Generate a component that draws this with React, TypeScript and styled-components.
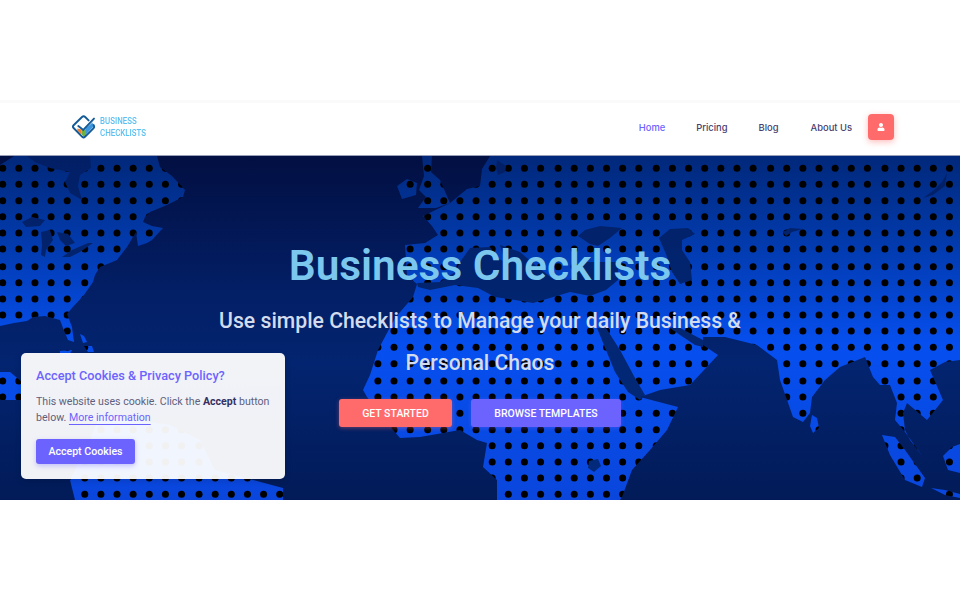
import React from "react";
import styled, { createGlobalStyle } from "styled-components";
import { FaUser } from "react-icons/fa";

const Global = createGlobalStyle`
  html, body { margin: 0; padding: 0; background: #fff; }
  body { font-family: Roboto, "Liberation Sans", sans-serif; }
  * { box-sizing: border-box; }
`;

const Page = styled.div`
  position: relative;
  width: 960px;
  height: 600px;
  padding-top: 100px;
  overflow: hidden;
  background: #fff;
`;

const Header = styled.header`
  height: 56px;
  background: #fff;
  border-top: 3px solid #fafafa;
  border-bottom: 1px solid #9a9fb8;
  display: flex;
  align-items: center;
  justify-content: space-between;
  padding: 0 66px 4px 72px;
`;

const Brand = styled.div`
  display: flex;
  align-items: center;
  gap: 4px;
`;

const BrandText = styled.div`
  display: flex;
  flex-direction: column;
  font-family: Roboto, sans-serif;
  font-size: 9.5px;
  line-height: 12px;
  font-weight: 500;
  color: #5cc0f2;
  text-transform: uppercase;
  transform: scaleX(0.83);
  transform-origin: left center;
`;

const Nav = styled.nav`
  display: flex;
  align-items: center;
`;

const NavLink = styled.a<{ $active?: boolean; $gap: number }>`
  font-family: Inter, "Open Sans", sans-serif;
  font-size: 9.4px;
  font-weight: 500;
  color: ${(p) => (p.$active ? "#6c63ff" : "#454070")};
  margin-right: ${(p) => p.$gap}px;
`;

const UserButton = styled.button`
  width: 26px;
  height: 26px;
  border: 0;
  padding: 0;
  border-radius: 4px;
  background: #ff6b6b;
  color: #fff;
  display: flex;
  align-items: center;
  justify-content: center;
  box-shadow: 0 2px 6px rgba(255, 107, 107, 0.45);
`;

const Hero = styled.section`
  position: relative;
  height: 344px;
  overflow: hidden;
  display: flex;
  flex-direction: column;
  align-items: center;
  background: linear-gradient(180deg, #020f42 0%, #031f66 40%, #032470 60%, #021b58 100%);
`;

const MapArt = styled.svg`
  position: absolute;
  inset: 0;
  width: 960px;
  height: 344px;
`;

const Title = styled.h1`
  position: relative;
  margin: 80px 0 0;
  font-size: 42.4px;
  line-height: 60px;
  font-weight: 600;
  color: #7cc7ee;
`;

const Subtitle = styled.p`
  position: relative;
  margin: 4px 0 0;
  width: 560px;
  text-align: center;
  font-size: 21.2px;
  line-height: 42px;
  font-weight: 500;
  color: #d3dcef;
`;

const Actions = styled.div`
  position: relative;
  margin-top: 15px;
  display: flex;
  gap: 19px;
`;

const HeroButton = styled.a<{ $tone: string; $width: number }>`
  width: ${(p) => p.$width}px;
  height: 28px;
  border-radius: 3px;
  display: flex;
  align-items: center;
  justify-content: center;
  background: ${(p) => p.$tone};
  color: #fff;
  font-size: 10.5px;
  font-weight: 500;
  box-shadow: 0 1px 4px ${(p) => p.$tone}66;
`;

const CookieCard = styled.aside`
  position: absolute;
  left: 21px;
  top: 353px;
  width: 264px;
  height: 126px;
  padding: 15px 15px 0;
  border-radius: 5px;
  background: rgba(255, 255, 255, 0.945);
  box-shadow: 0 2px 6px rgba(0, 0, 0, 0.15);
`;

const CookieTitle = styled.h4`
  margin: 0;
  font-size: 12.7px;
  line-height: 16px;
  font-weight: 500;
  color: #6c63ff;
`;

const CookieText = styled.p`
  margin: 10px 0 0;
  font-size: 10.6px;
  line-height: 15.5px;
  color: #5f5f7c;

  strong {
    font-weight: 700;
    color: #35305f;
  }
`;

const CookieLink = styled.a`
  color: #6c63ff;
  text-decoration: underline;
  text-decoration-color: #6c63ff;
  text-decoration-thickness: 1px;
  text-underline-offset: 3px;
`;

const CookieButton = styled.button`
  display: block;
  margin-top: 14px;
  width: 99px;
  height: 25px;
  border: 0;
  padding: 0;
  border-radius: 3px;
  background: #6c63ff;
  color: #fff;
  font-family: Roboto, sans-serif;
  font-size: 10.6px;
  font-weight: 500;
  box-shadow: 0 2px 5px rgba(108, 99, 255, 0.35);
`;

const rows = [168.3,184.3,200.7,216.7,233,249,266.7,282.7,299,315,331,347.3,363.7,381,397,413.3,429.7,445.7,462,478,494.3];
const jumps = [75,190,305,418,550,650,762,878];
const cols: number[] = [];
{
  let x = 2.7;
  while (x < 965) {
    cols.push(x);
    const next = x + 16.13;
    const hit = jumps.some((j) => x < j && next >= j);
    x = next + (hit ? 1.4 : 0);
  }
}

const land = [
  // North America
  "M14 156 L157 156 L160 167 L172 176 L185 190 L183 197 L167 205 L150 212 L145 217 L143 222 L152 226 L163 228 L152 240 L147 243 L138 246 L136 232 L127 247 L117 260 L100 267 L95 275 L93 282 L84 295 L72 308 L67 314 L72 327 L74 342 L68 340 L63 328 L60 320 L45 316 L33 317 L27 321 L14 323 L0 326 L0 165 Z",
  // Caribbean islands
  "M80 334 L84 336 L87 342 L83 343 Z",
  "M84 346 L92 346 L94 352 L88 352 Z",
  "M60 351 L72 350 L70 354 L60 354 Z",
  // Central America & S America
  "M0 372 L10 372 L22 382 L22 400 L0 400 Z",
  "M100 415 L170 425 L200 440 L215 470 L283 488 L283 500 L75 500 L70 480 L90 440 Z",
  // Ireland & UK
  "M397 186 L407 179 L417 183 L416 195 L402 199 Z",
  "M422 156 L432 156 L431 172 L440 180 L450 203 L436 208 L418 208 L426 197 L419 190 L424 176 Z",
  // Eurasia + Africa
  "M490 156 L960 156 L960 360 L945 362 L930 370 L943 400 L927 420 L907 403 L903 413 L905 430 L910 440 L923 457 L905 432 L895 420 L897 403 L890 385 L880 385 L873 377 L865 357 L840 367 L825 380 L812 397 L810 413 L803 422 L793 417 L780 380 L777 360 L757 345 L725 337 L703 337 L703 345 L718 355 L690 385 L660 390 L640 397 L678 407 L667 430 L650 450 L632 470 L622 497 L620 500 L497 500 L497 480 L483 467 L487 443 L477 440 L460 430 L420 437 L400 438 L387 423 L367 397 L363 390 L370 375 L378 350 L395 318 L413 297 L417 284 L407 276 L405 245 L425 243 L438 235 L432 226 L423 216 L450 203 L467 189 L480 186 L482 169 Z",
  // Sri Lanka, Sumatra, Borneo, Java, Hainan
  "M812 415 L817 418 L819 428 L813 433 L810 426 Z",
  "M882 435 L895 437 L905 450 L925 478 L922 487 L905 480 L890 455 Z",
  "M943 456 L952 447 L960 444 L960 473 L948 470 Z",
  "M931 488 L945 490 L960 494 L960 498 L945 495 Z",
];

const seas = [
  // Hudson Bay & Canada north
  "M27 156 L90 156 L91 168 L80 175 L78 186 L82 200 L70 193 L65 182 L70 172 L50 168 L35 162 Z",
  // Great lakes
  "M22 222 L32 217 L45 220 L40 226 L26 227 Z",
  "M41 232 L50 230 L53 240 L46 250 L45 257 L41 255 L42 245 Z",
  "M57 232 L68 234 L75 243 L66 246 L60 240 Z",
  "M62 257 L72 250 L88 243 L93 243 L80 252 L70 257 Z",
  // Baltic
  "M497 160 L506 166 L505 172 L498 175 L496 168 Z",
  // Mediterranean
  "M417 283 L440 282 L455 272 L460 262 L470 248 L490 247 L497 258 L505 262 L500 245 L520 252 L535 265 L552 278 L570 280 L580 262 L600 262 L618 262 L618 280 L606 290 L590 296 L570 292 L550 298 L533 303 L515 300 L495 297 L478 288 L455 285 L430 290 L418 287 Z",
  // Black sea
  "M578 236 L585 230 L600 226 L622 228 L610 238 L598 246 L590 244 Z",
  // Caspian
  "M659 238 L670 229 L688 228 L695 234 L682 240 L682 250 L690 262 L692 280 L680 284 L672 272 L666 254 Z",
  // Aral
  "M783 232 L790 228 L803 229 L792 232 L786 236 Z",
  // Baikal
  "M947 173 L945 186 L933 195 L923 198 L934 190 L942 182 Z",
  // Persian gulf
  "M670 328 L680 328 L703 340 L703 347 L695 345 L680 335 Z",
  // Red sea
  "M597 328 L606 328 L620 350 L635 378 L645 395 L640 400 L628 392 L615 372 L608 355 Z",
  // Lake Victoria
  "M589 461 L598 459 L601 466 L594 472 L588 468 Z",
  // Gulf by Hainan
  "M932 372 L960 362 L960 380 L950 372 L938 380 Z",
];

const HeroMap = () => (
  <MapArt viewBox="0 156 960 344" aria-hidden="true">
    <defs>
      <linearGradient id="landFill" x1="0" y1="156" x2="0" y2="500" gradientUnits="userSpaceOnUse">
        <stop offset="0" stopColor="#01287a" />
        <stop offset="0.25" stopColor="#023aac" />
        <stop offset="0.55" stopColor="#064fef" />
        <stop offset="1" stopColor="#0a46dc" />
      </linearGradient>
      <linearGradient id="seaFill" x1="0" y1="156" x2="0" y2="500" gradientUnits="userSpaceOnUse">
        <stop offset="0" stopColor="#021f66" />
        <stop offset="0.5" stopColor="#022672" />
        <stop offset="1" stopColor="#022a7c" />
      </linearGradient>
      <mask id="landMask" maskUnits="userSpaceOnUse" x="0" y="156" width="960" height="344">
        {land.map((d) => <path key={d} d={d} fill="#fff" />)}
      </mask>
    </defs>
    <g mask="url(#landMask)">
      <rect x="0" y="156" width="960" height="344" fill="url(#landFill)" />
      {rows.map((y) => cols.map((x) => <circle key={`${x}-${y}`} cx={x} cy={y} r="3.5" fill="#000" />))}
      {seas.map((d) => <path key={d} d={d} fill="url(#seaFill)" />)}
    </g>
  </MapArt>
);

const Logo = () => (
  <svg width="24" height="24" viewBox="0 0 24 24" aria-hidden="true">
    <path d="M5.3 13.5 L9.7 14.5 V19.6 L8 18.2 L5.3 15.6 Z" fill="#f08030" />
    <path d="M9.7 14 L12 15.6 L14 13.6 V21 L11.5 21.4 L9.7 19.6 Z" fill="#6fb23f" />
    <path d="M14 13 L20.5 7.5 L21.5 11.5 L14 19.6 Z" fill="#3d97de" />
    <path d="M16.6 5.4 L13.2 2 Q11.6 0.6 10 2 L1.6 10.2 Q0.2 11.6 1.6 13 L10.2 21.8 Q11.6 23 13 21.8 L21.4 13.4 Q22.8 12 21.6 10"
      fill="none" stroke="#135a96" strokeWidth="1.9" strokeLinecap="round" />
    <path d="M6.3 11 L11.3 15 L22 3.6" fill="none" stroke="#135a96" strokeWidth="1.9" strokeLinecap="round" />
  </svg>
);

export default function App() {
  return (
    <Page>
      <Global />
      <Header>
        <Brand>
          <Logo />
          <BrandText>
            <span>Business</span>
            <span>Checklists</span>
          </BrandText>
        </Brand>
        <Nav>
          <NavLink $active $gap={31}>Home</NavLink>
          <NavLink $gap={31}>Pricing</NavLink>
          <NavLink $gap={32}>Blog</NavLink>
          <NavLink $gap={16}>About Us</NavLink>
          <UserButton aria-label="Account"><FaUser size={8} /></UserButton>
        </Nav>
      </Header>
      <Hero>
        <HeroMap />
        <Title>Business Checklists</Title>
        <Subtitle>Use simple Checklists to Manage your daily Business &amp; Personal Chaos</Subtitle>
        <Actions>
          <HeroButton $tone="#ff6b6b" $width={113}>GET STARTED</HeroButton>
          <HeroButton $tone="#6c63ff" $width={150}>BROWSE TEMPLATES</HeroButton>
        </Actions>
      </Hero>
      <CookieCard>
        <CookieTitle>Accept Cookies &amp; Privacy Policy?</CookieTitle>
        <CookieText>
          This website uses cookie. Click the <strong>Accept</strong> button below.{" "}
          <CookieLink>More information</CookieLink>
        </CookieText>
        <CookieButton>Accept Cookies</CookieButton>
      </CookieCard>
    </Page>
  );
}
